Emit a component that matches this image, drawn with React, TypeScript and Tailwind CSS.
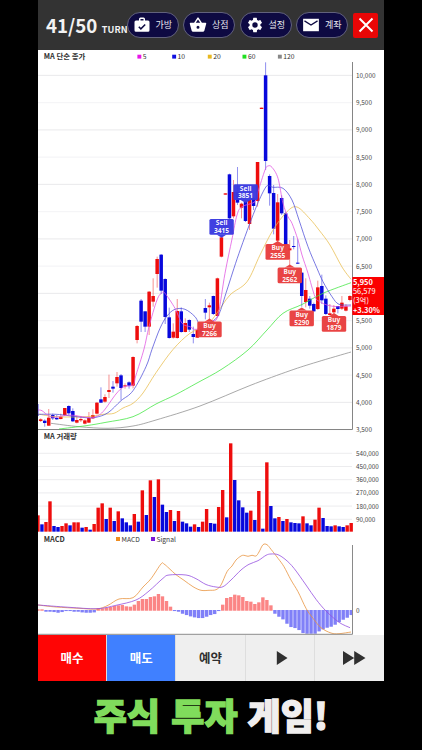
import type { ReactNode } from 'react';

type Candle = [up: 0 | 1, open: number, close: number, high: number, low: number];

const STEP = 4.016;
const RED = '#ee0d0d';
const BLUE = '#0808dc';
const LABEL = { fontFamily: '"Noto Sans CJK KR", sans-serif' };

// Converts thirds of a pixel, measured from an origin, to chart pixels.
const third = (origin: number, list: Candle[]): Candle[] =>
  list.map(([u, a, b, c, d]) => [u, origin + a / 3, origin + b / 3, origin + c / 3, origin + d / 3]);

const candles: Candle[] = [
  ...third(170, [
    [0, 733, 737, 702, 737], [1, 748, 753, 745, 756], [0, 752, 759, 748, 770], [1, 743, 767, 717, 768],
    [0, 735, 745, 731, 750], [0, 744, 748, 735, 750], [1, 740, 747, 731, 748], [1, 714, 735, 714, 738],
    [0, 708, 730, 706, 735], [0, 723, 754, 715, 756], [1, 750, 758, 737, 760], [1, 747, 751, 740, 756],
    [1, 751, 761, 748, 763], [1, 744, 758, 726, 759], [1, 735, 745, 718, 747], [1, 698, 731, 696, 733],
    [0, 688, 698, 652, 699], [1, 681, 695, 673, 698], [1, 660, 666, 614, 684], [0, 650, 656, 633, 668],
    [1, 621, 640, 606, 650], [0, 616, 654, 612, 690], [1, 646, 649, 640, 656], [0, 637, 647, 634, 656],
    [1, 561, 647, 559, 655], [1, 468, 510, 465, 520],
  ]),
  ...third(230, [
    [0, 212, 275, 207, 306], [0, 244, 290, 244, 306], [1, 185, 290, 183, 315], [1, 198, 215, 145, 230],
    [1, 87, 132, 80, 173], [0, 74, 182, 72, 192], [0, 147, 261, 145, 282], [0, 262, 324, 233, 326],
    [1, 305, 323, 280, 326], [1, 243, 324, 207, 326], [0, 244, 306, 232, 308], [1, 279, 306, 265, 307],
    [0, 270, 299, 268, 306], [0, 312, 321, 290, 340], [1, 300, 323, 298, 324], [0, 290, 310, 285, 315],
    [0, 234, 248, 207, 268], [1, 226, 232, 218, 270], [0, 198, 252, 197, 255], [1, 145, 258, 143, 262],
    [1, 22, 80, 20, 82],
  ]),
  ...third(60, [
    [1, 400, 404, 400, 404], [0, 343, 475, 341, 480], [1, 396, 469, 360, 475], [0, 396, 428, 321, 435],
    [1, 431, 443, 428, 475], [0, 425, 483, 420, 486], [1, 420, 492, 418, 510], [0, 415, 438, 410, 450],
    [1, 306, 423, 306, 440], [1, 143, 147, 143, 147], [0, 46, 303, 7, 330],
  ]),
  ...third(170, [
    [0, 18, 70, 13, 107], [0, 69, 176, 45, 193], [1, 97, 212, 72, 215], [0, 84, 130, 76, 135],
    [0, 130, 225, 125, 230], [1, 235, 241, 210, 285],
  ]),
  ...third(230, [
    [0, 48, 51, 18, 58], [0, 98, 101, 28, 102], [0, 128, 198, 126, 230], [1, 180, 216, 145, 232],
    [0, 206, 227, 198, 236], [0, 222, 244, 218, 246], [1, 172, 237, 152, 240], [0, 168, 211, 134, 222],
    [0, 206, 252, 196, 255], [1, 250, 255, 222, 257], [1, 236, 247, 225, 250], [0, 228, 237, 228, 250],
    [1, 218, 236, 198, 240], [1, 229, 242, 222, 244], [1, 198, 210, 196, 214],
  ]),
];

// Bar tops, in thirds of a pixel below y = 430.
const volumes = [
  256, 283, 276, 214, 288, 291, 288, 280, 286, 277, 277, 293, 291, 299, 282, 233, 220, 267, 233, 273,
  244, 265, 277, 286, 252, 275, 181, 255, 151, 201, 148, 224, 246, 240, 273, 243, 275, 280, 290, 283,
  291, 275, 237, 279, 281, 231, 180, 262, 40, 150, 211, 232, 248, 242, 270, 183, 296, 97, 228, 265,
  261, 273, 267, 277, 279, 280, 259, 280, 286, 269, 233, 264, 288, 289, 286, 289, 291, 286, 279,
];
const volumeColors =
  'rbrrbbrrbrrbrbrrrbrbrbbbrbrbrbrbbrbrbbbrbrrbbrrbrbbbbrbrbrbbrbrbbbrbbrrbbbrbbrr';

// Histogram ends, in thirds of a pixel below y = 530; the zero line is at 241.
const histogram = [
  238, 238, 245, 245, 246, 248, 246, 243, 243, 245, 245, 247, 248, 248, 247, 235, 235, 233, 231, 228,
  226, 225, 229, 230, 224, 213, 207, 207, 201, 199, 192, 199, 213, 230, 243, 245, 251, 255, 259, 262,
  264, 264, 260, 255, 252, 243, 224, 204, 201, 194, 196, 201, 213, 215, 222, 217, 202, 210, 226, 251,
  260, 268, 281, 291, 294, 300, 309, 311, 311, 311, 304, 298, 293, 290, 284, 276, 269, 263, 255,
];

function curve(points: string) {
  const p = points.split(' ').map((s) => s.split(',').map(Number));
  let d = `M${p[0][0]} ${p[0][1]}`;
  for (let i = 1; i < p.length; i++) {
    const a = p[Math.max(i - 2, 0)];
    const b = p[i - 1];
    const c = p[i];
    const e = p[Math.min(i + 1, p.length - 1)];
    d += `C${b[0] + (c[0] - a[0]) / 6} ${b[1] + (c[1] - a[1]) / 6} ${c[0] - (e[0] - b[0]) / 6} ${c[1] - (e[1] - b[1]) / 6} ${c[0]} ${c[1]}`;
  }
  return d;
}

const averages = [
  { color: '#8c8c8c', points: '51,423.3 79,426.7 108,428.3 133,426 156,420 200,406 250,385.5 290,370.7 317,362 351,352' },
  { color: '#3ce63c', points: '59,429 86,425.7 106,422.3 133,416.7 156,404 175,395 197,383 222,369 248,350 267,330 283,313.3 302,304.5 323,293.3 351,282.7' },
  { color: '#e8bc4c', points: '38,414 56,416.7 86,416.7 103,414.3 114,413.3 123,408 133,403.3 143,393 156,372.7 173,349.5 190,333.3 207,325 217,313 230,295 247,281.7 260,255 273,230 287,211.7 297,207 310,219 319,230 330,245 342,267 351,279.3' },
  { color: '#4c4cd8', points: '38,414.3 56,414.3 69,415.7 86,417.7 96,417.3 108,412.7 121,400.7 133,390.7 146,366.7 152,349.3 160,328.3 167,316 175,309.3 185,309.3 195,316.7 202,326.7 215,319.3 220,311.7 227,290 239,253.3 255,210 265,188.3 269,185.7 273,187.3 283,188.3 292,200 299,220 308,246.7 317,268.3 323,281.7 332,296.7 339,304.3 351,305' },
  { color: '#e050e0', points: '38,410 42,410.7 49,416 56,417.3 69,415 86,417.3 94,417.3 103,411.7 116,394 124,386.7 133,385 136,375 144,349 149,326.7 157,300 162,292.7 165,293.3 175,308.3 182,323.3 190,326.7 197,329.3 212,321.7 218,315 225,273.3 232,239 237,215 242,206.7 255,201.7 258,191.7 265,170 268,166 272,167.3 278,178.3 283,203.3 288,216.7 292,223.3 298,240 302,255 308,273.3 315,296.7 320,301.7 327,305 337,306.7 351,306' },
];

const macdLine =
  '38,605 56,607 79,608.3 97,609 108,605.3 119,599 133,597.7 143,587 151,578.7 161,564 164,564 169,568.3 176,574.7 184,580.3 193,586.7 201,590.3 209,590.3 216,589.7 221,585 227,571.7 232,566 236,560 241,556 244,555.3 248,556.3 252,555.3 256,556 259,552 263,544.7 267,544.7 271,549.3 278,558.3 284,566.7 291,580 298,591.7 306,608.3 313,618.3 321,627.7 331,633 339,633.7 351,632';
const signalLine =
  '38,605 69,607.3 97,608.7 116,605.3 136,600 149,591 163,578.3 169,575 186,575 196,578.7 206,584.5 216,587 223,586.7 231,580 241,570 249,564.3 258,560.7 266,555.3 271,554 278,554.7 286,560 294,568.3 306,585 316,599.3 326,611 339,622.3 350,627.7';

function Tag({ x, y, side, value }: { x: number; y: number; side: 'Buy' | 'Sell'; value: string }) {
  const buy = side === 'Buy';
  const fill = buy ? '#e83c3c' : '#3838e0';
  return (
    <g fillOpacity="0.96">
      <rect x={x - 12.2} y={y} width="24.4" height="15.8" rx="1.5" fill={fill} />
      <path
        d={buy ? `M${x - 5} ${y + 0.2}L${x} ${y - 3}L${x + 5} ${y + 0.2}Z` : `M${x - 5} ${y + 15.6}L${x} ${y + 18.8}L${x + 5} ${y + 15.6}Z`}
        fill={fill}
      />
      <g fill="#fff" textAnchor="middle" fontSize="6.6" fontWeight="700" fontFamily='"Noto Sans", sans-serif'>
        <text x={x} y={y + 6.4}>{side}</text>
        <text x={x} y={y + 14.1}>{value}</text>
      </g>
    </g>
  );
}

function PriceChart() {
  return (
    <svg className="block h-[380px] w-full overflow-visible" viewBox="38 50 346 380">
      {Array.from({ length: 14 }, (_, i) => (
        <g key={i}>
          <path d={`M38 ${75.4 + i * 27.25}H352`} stroke={i % 2 ? '#f2f2f4' : '#e6e6ea'} strokeWidth="0.9" />
          <text x="356" y={77.9 + i * 27.25} fontSize="6.4" fill="#444" style={LABEL}>
            {(10000 - i * 500).toLocaleString('en-US')}
          </text>
        </g>
      ))}
      <path d="M352.5 62V429.5H38" fill="none" stroke="#858585" />
      {candles.map(([up, top, bottom, high, low], i) => {
        const x = 40.7 + (i - 1) * STEP;
        const left = Math.max(x - 1.75, 38);
        const color = up ? RED : BLUE;
        return (
          <g key={i}>
            <path d={`M${Math.max(x, 38.3)} ${high}V${low}`} stroke={color} strokeWidth="0.9" opacity="0.5" />
            <rect x={left} y={top} width={x + 1.75 - left} height={bottom - top} fill={color} />
          </g>
        );
      })}
      {averages.map((a) => (
        <path key={a.color} d={curve(a.points)} fill="none" stroke={a.color} strokeWidth="0.75" />
      ))}
      <Tag x={245.6} y={184.3} side="Sell" value="3851" />
      <Tag x={221.6} y={219} side="Sell" value="3415" />
      <Tag x={209.5} y={321.5} side="Buy" value="7266" />
      <Tag x={277.7} y={243.9} side="Buy" value="2555" />
      <Tag x={289.8} y={267.4} side="Buy" value="2562" />
      <Tag x={301.7} y={310.4} side="Buy" value="5290" />
      <Tag x={334} y={316} side="Buy" value="1879" />
      <rect x="352.3" y="277" width="31.7" height="38" fill="#fb0000" />
      <g fill="#fff" fontSize="7.4" style={LABEL}>
        <text x="353" y="284.8" fontWeight="700">5,950</text>
        <text x="353" y="294.1">56,579</text>
        <text x="353" y="303.4">(3억)</text>
        <text x="353" y="312.7" fontWeight="700">+3.30%</text>
      </g>
      <g fontSize="7" fill="#333" style={LABEL}>
        <text x="43.8" y="59.3" fontWeight="700" fontSize="7.4" fill="#333">MA 단순 종가</text>
        {[
          [137.4, '#e815e8', '5'],
          [172.2, '#1010e0', '10'],
          [207.8, '#e8b820', '20'],
          [242.5, '#20e020', '60'],
          [277.9, '#888', '120'],
        ].map(([x, color, label]) => (
          <g key={label}>
            <rect x={x} y="54.7" width="3.9" height="3.9" fill={String(color)} />
            <text x={Number(x) + 5.4} y="59.2" fontSize="6.8">{label}</text>
          </g>
        ))}
      </g>
    </svg>
  );
}

function VolumeChart() {
  return (
    <svg className="block h-[102px] w-full" viewBox="38 430 346 102">
      {[540, 450, 360, 270, 180, 90].map((v, i) => (
        <g key={v}>
          <path d={`M38 ${453.3 + i * 13.2}H352`} stroke="#eaeaec" strokeWidth="0.9" />
          <text x="356" y={455.8 + i * 13.2} fontSize="6.3" fill="#444" style={LABEL}>{`${v},000`}</text>
        </g>
      ))}
      {volumes.map((v, i) => (
        <rect
          key={i}
          x={42 + (i - 1) * STEP - 1.75}
          y={430 + v / 3}
          width="3.4"
          height={(305 - v) / 3}
          fill={volumeColors[i] === 'r' ? RED : BLUE}
        />
      ))}
      <text x="43.8" y="439" fontSize="7.4" fontWeight="700" fill="#333" style={LABEL}>MA 거래량</text>
    </svg>
  );
}

function MacdChart() {
  return (
    <svg className="block h-[103px] w-full" viewBox="38 532 346 103">
      {histogram.map((h, i) => (
        <rect
          key={i}
          x={42 + (i - 1) * STEP - 1.7}
          y={530 + Math.min(h, 240) / 3}
          width="3.4"
          height={Math.abs(h - 241) / 3 + 0.4}
          fill={h < 241 ? '#fb8585' : '#8080f8'}
        />
      ))}
      <path d={curve(macdLine)} fill="none" stroke="#e89440" strokeWidth="0.8" />
      <path d={curve(signalLine)} fill="none" stroke="#9650e0" strokeWidth="0.8" />
      <path d="M352.5 545V634.3H38" fill="none" stroke="#8a8a8a" />
      <g fontSize="7" fill="#333" style={LABEL}>
        <text x="43.8" y="541.7" fontSize="7.4" fontWeight="700">MACD</text>
        <rect x="116" y="537" width="4" height="4" fill="#ee8c20" />
        <text x="121.5" y="541.5" fontSize="6.7">MACD</text>
        <rect x="151" y="537" width="4" height="4" fill="#7a18d8" />
        <text x="156.5" y="541.5" fontSize="6.7">Signal</text>
        <text x="356" y="613" fontSize="6.4">0</text>
      </g>
    </svg>
  );
}

function Pill({ label, children }: { label: string; children: ReactNode }) {
  return (
    <button className="flex h-[25.4px] w-[52px] shrink-0 items-center rounded-full border border-[#62627c] bg-[#0e0a42] pl-[5px] text-[9px] leading-none text-[#e8e8ee]">
      <svg className="h-[18px] w-[18px] shrink-0" viewBox="0 0 24 24" fill="#fff">{children}</svg>
      <span className="ml-[5px] whitespace-nowrap">{label}</span>
    </button>
  );
}

const action = 'flex items-center justify-center border-r border-[#dedede] text-[12.5px] font-bold';

export default function App() {
  return (
    <main className="flex h-[750px] w-[422px] flex-col items-center bg-black font-['Noto_Sans_CJK_KR',sans-serif]">
      <section className="flex h-[681px] w-[346px] flex-col bg-white">
        <header className="flex h-[50px] shrink-0 items-center bg-[#333] pl-2">
          <div className="flex w-[80.6px] shrink-0 items-baseline whitespace-nowrap font-bold leading-none text-[#f2f2f2]">
            <span className="text-[18.7px]">41/50</span>
            <span className="ml-[4.5px] text-[9.2px]">TURN</span>
          </div>
          <nav className="flex shrink-0 gap-[4.5px]">
            <Pill label="가방">
              <path d="M20 6h-4V4a2 2 0 0 0-2-2h-4a2 2 0 0 0-2 2v2H4a2 2 0 0 0-2 2v11a2 2 0 0 0 2 2h16a2 2 0 0 0 2-2V8a2 2 0 0 0-2-2ZM10 4h4v2h-4V4Zm.5 14.5L7 15l1.4-1.4 2.1 2.1 5.1-5.1L17 12l-6.500 6.500Z" />
            </Pill>
            <Pill label="상점">
              <path d="m17.210 9-4.380-6.560a1 1 0 0 0-1.660 0L6.790 9H2a1 1 0 0 0-1 1l.04.27 2.540 9.270A2 2 0 0 0 5.500 21h13a2 2 0 0 0 1.930-1.460l2.540-9.270L23 10a1 1 0 0 0-1-1h-4.790ZM9 9l3-4.400L15 9H9Zm3 8a2 2 0 1 1 0-4 2 2 0 0 1 0 4Z" />
            </Pill>
            <Pill label="설정">
              <path d="M19.140 12.940c.04-.3.06-.61.06-.94 0-.32-.02-.64-.07-.94l2.030-1.580a.49.49 0 0 0 .12-.61l-1.920-3.320a.49.49 0 0 0-.59-.22l-2.390.96a7 7 0 0 0-1.620-.94l-.36-2.540a.48.48 0 0 0-.48-.41h-3.840a.47.47 0 0 0-.47.41l-.36 2.540c-.59.24-1.130.57-1.620.94l-2.390-.96a.47.47 0 0 0-.59.22L2.740 8.870a.47.47 0 0 0 .12.61l2.030 1.580a7.400 7.400 0 0 0 0 1.880l-2.030 1.580a.49.49 0 0 0-.12.61l1.920 3.320c.12.22.37.29.59.22l2.390-.96c.5.38 1.030.7 1.620.94l.36 2.540c.05.24.24.41.48.41h3.840c.24 0 .44-.17.47-.41l.36-2.540a7 7 0 0 0 1.620-.94l2.390.96c.22.08.47 0 .59-.22l1.920-3.320a.47.47 0 0 0-.12-.61l-2.010-1.580ZM12 15.600a3.600 3.600 0 1 1 0-7.200 3.600 3.600 0 0 1 0 7.200Z" />
            </Pill>
            <Pill label="계좌">
              <path d="M1.500 3.700h21v16.600h-21Z" />
              <path d="m3.300 6.500 8.700 5.500 8.700-5.500" fill="none" stroke="#0e0a42" strokeWidth="1.700" />
            </Pill>
          </nav>
          <button className="ml-[5px] flex h-[25px] w-[25px] shrink-0 items-center justify-center rounded-[2px] bg-[#e90606]">
            <svg className="h-[16px] w-[16px]" viewBox="0 0 16 16" stroke="#fff" strokeWidth="2">
              <path d="m1.500 1.500 13 13M14.500 1.500l-13 13" />
            </svg>
          </button>
        </header>
        <PriceChart />
        <VolumeChart />
        <MacdChart />
        <footer className="grid h-[46px] grid-cols-5 bg-[#efefef] text-[#2f2f2f]">
          <button className={`${action} bg-[#ff0505] text-white`}>매수</button>
          <button className={`${action} bg-[#4080ff] text-white`}>매도</button>
          <button className={action}>예약</button>
          <button className={action}>
            <svg className="ml-1 h-[14px] w-[12px]" viewBox="0 0 12 14" fill="#303030"><path d="M.8 0v14L11.500 7Z" /></svg>
          </button>
          <button className="flex items-center justify-center">
            <svg className="ml-2.5 h-[14px] w-[23px]" viewBox="0 0 23 14" fill="#303030"><path d="M0 0v14L11.200 7ZM11.200 0v14L22.500 7Z" /></svg>
          </button>
        </footer>
      </section>
      <h1 className="flex h-[65px] items-center justify-center whitespace-nowrap text-[36px] font-black leading-none text-[#f0eeee] [-webkit-text-stroke:1.3px_currentColor]">
        <span className="text-[#80dc5c] [word-spacing:3px]">주식 투자</span>
        <span className="ml-[10px]">게임!</span>
      </h1>
    </main>
  );
}
